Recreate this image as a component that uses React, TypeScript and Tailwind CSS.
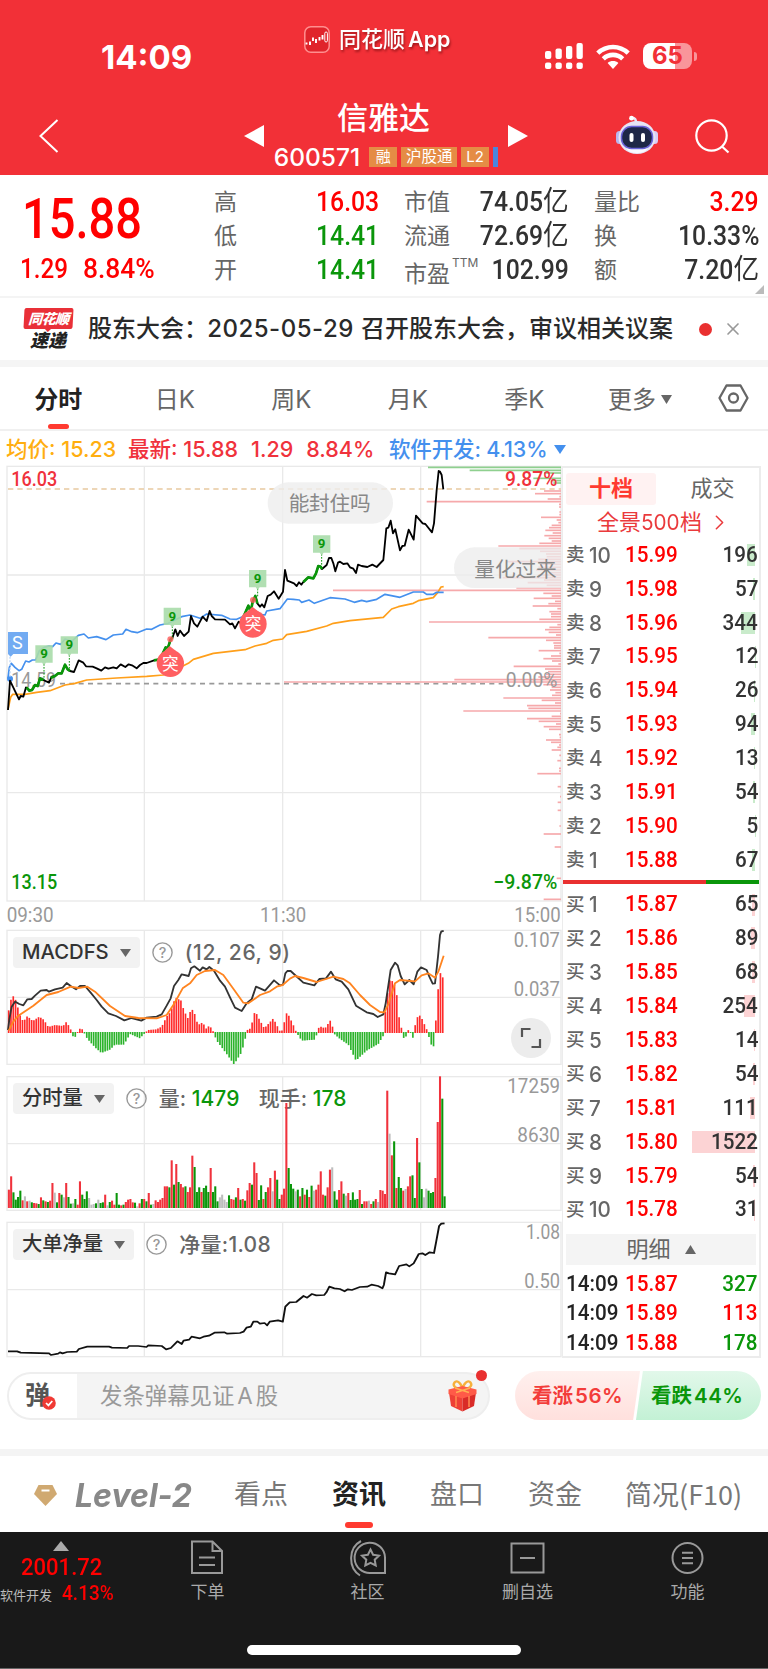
import React from "react";
import { ChevronRight, X } from "lucide-react";
import clsx from "clsx";

type Pt = [number, number];

// chart svgs use 3 units per css pixel
const priceBlack =
  "24,750 30,662 57,718 62,708 70,710 78,682 88,692 96,690 105,675 113,678 120,655 130,660 147,668 155,650 165,648 175,640 185,640 195,614 203,628 210,633 222,636 236,601 250,608 258,619 278,620 290,625 304,632 315,622 325,626 340,622 350,625 362,613 376,621 386,613 396,616 410,625 420,615 430,609 440,609 462,601 480,598 497,562 503,566 512,538 518,532 526,508 533,528 540,512 552,528 566,515 573,468 582,490 592,500 608,470 620,483 629,453 635,468 645,478 675,479 690,493 697,490 705,505 716,485 722,490 745,437 752,455 758,425 766,408 772,430 780,440 786,433 793,442 803,408 812,404 822,394 836,416 849,395 855,330 862,362 882,370 890,378 897,367 904,374 910,366 925,352 940,355 948,340 955,318 962,320 966,327 980,315 987,294 994,294 1000,310 1006,334 1014,308 1020,305 1030,312 1042,310 1050,322 1060,326 1068,339 1074,314 1085,318 1102,321 1117,314 1130,321 1150,300 1159,205 1165,203 1172,182 1179,220 1186,208 1200,271 1207,258 1214,257 1226,209 1241,239 1248,167 1268,190 1276,192 1296,217 1302,190 1310,90 1316,33 1320,35 1325,45 1330,88";

const greenRuns = [
  "80,682 88,692 96,690 105,675 113,678 120,655 130,660",
  "152,654 165,648 175,640 185,640 195,614 203,628 210,633",
  "462,601 480,598 497,562 503,566 512,538 518,532",
  "722,490 745,437 752,455 758,425 766,408 772,430",
  "910,366 925,352 940,355 948,340 955,318 962,320 966,327",
];

const avgLine =
  "24,748 32,712 38,703 75,703 110,697 150,692 195,675 225,670 260,660 350,654 440,649 490,645 520,632 565,610 580,598 640,580 735,569 765,558 800,550 820,541 848,537 860,524 920,514 980,498 1000,490 1050,482 1150,472 1175,447 1195,440 1240,430 1255,422 1300,413 1313,398 1323,381 1331,380";

const sectorLine =
  "24,655 28,622 34,610 45,622 57,632 65,628 77,603 87,606 97,600 107,600 118,572 132,562 147,558 158,560 168,549 182,553 195,537 215,544 235,526 252,522 265,534 290,530 318,539 340,525 368,522 378,508 395,515 412,518 440,507 455,508 480,495 505,490 545,470 570,465 600,475 620,462 665,466 690,477 710,478 745,463 765,458 780,463 795,465 800,453 840,446 862,417 880,418 898,420 905,427 927,420 943,430 990,413 1035,417 1063,427 1085,421 1100,425 1130,418 1155,403 1200,412 1240,396 1270,396 1280,403 1300,403 1310,397 1331,397";

// volume by price: [y, left edge], all bars end at the right border
const chipsGreen: Pt[] = [[22, 1284], [31, 1409], [39, 1632], [55, 1600], [62, 1655], [69, 1660]];
const chipsRed: Pt[] = [
  [93, 1632], [101, 1605], [110, 1678], [117, 1643], [125, 1280], [133, 1677], [141, 1677], [156, 1678], [164, 1678],
  [172, 1623], [180, 1670], [188, 1675], [196, 1655], [203, 1647], [211, 1636], [219, 1658], [227, 1633], [235, 1646],
  [243, 1655], [250, 1618], [258, 1495], [266, 1558], [274, 1620], [282, 1638], [290, 1640], [298, 1615], [305, 1520],
  [313, 1620], [322, 1615], [330, 1608], [338, 1645], [345, 1615], [353, 1508], [360, 1632], [368, 1583], [376, 1640],
  [384, 1549], [391, 999], [400, 1630], [408, 1655], [415, 1601], [424, 1665], [431, 1645], [438, 1598], [446, 1672],
  [455, 1648], [462, 1653], [470, 1653], [478, 1618], [486, 1287], [494, 1672], [502, 1648], [509, 1635], [517, 1646],
  [525, 1668], [533, 1465], [541, 1638], [549, 1660], [557, 1662], [564, 1662], [572, 1616], [580, 1678], [588, 1653],
  [596, 1630], [603, 1656], [612, 1675], [619, 1541], [627, 1635], [635, 1644], [643, 1638], [651, 1615], [659, 1363],
  [666, 852], [674, 1630], [682, 1655], [690, 1650], [698, 1666], [706, 1656], [714, 1510], [721, 1625], [729, 1665],
  [737, 1581], [745, 1585], [753, 1390], [761, 1680], [769, 1655], [776, 1581], [784, 1616], [792, 1668], [800, 1631],
  [808, 1647], [824, 1677], [832, 1679], [840, 1638], [847, 1653], [855, 1677], [862, 1672], [870, 1655], [886, 1678],
  [902, 1672], [925, 1677], [933, 1677], [941, 1612], [980, 1673], [1010, 1680], [1027, 1673], [1051, 1673],
  [1098, 1678], [1122, 1631], [1161, 1664], [1255, 1670], [1318, 1631],
];

const difLine =
  "24,510 28,478 35,440 45,425 58,432 70,436 82,418 95,417 105,407 122,392 140,390 147,395 165,388 188,383 200,369 212,378 228,388 240,378 255,378 272,398 290,420 305,440 325,460 348,468 373,481 395,474 424,482 440,473 470,470 485,463 500,437 512,415 522,378 535,360 545,343 566,348 573,325 583,319 600,332 608,322 620,328 628,321 642,332 660,362 675,380 690,412 705,443 725,453 740,430 755,418 768,380 780,385 795,392 822,361 840,376 849,374 856,340 862,333 872,333 885,345 910,368 943,376 958,357 978,355 993,335 1007,358 1025,365 1045,388 1068,437 1100,457 1120,462 1133,471 1150,463 1157,430 1172,330 1185,308 1193,316 1202,348 1214,373 1228,360 1241,373 1252,335 1263,322 1280,330 1288,350 1298,371 1305,370 1314,290 1320,225 1324,214 1331,213";
const deaLine =
  "26,512 40,485 55,467 100,437 140,405 175,396 212,380 235,384 262,380 285,395 330,438 375,468 415,474 470,475 500,465 522,432 548,385 570,370 590,345 615,333 645,330 670,345 700,386 730,428 745,430 780,405 810,394 830,380 848,375 870,356 885,348 910,354 950,366 1000,350 1030,357 1050,370 1080,405 1110,435 1140,456 1153,457 1166,430 1185,370 1200,360 1245,364 1265,346 1285,340 1305,353 1315,335 1331,287";

const histEnvelope: Pt[] = [
  [24, 462], [28, 440], [35, 410], [43, 408], [50, 430], [60, 466], [70, 485], [82, 468], [98, 483], [118, 470],
  [132, 480], [145, 501], [165, 495], [190, 498], [197, 485], [205, 495], [214, 512], [220, 530], [228, 528],
  [235, 510], [243, 503], [250, 512], [262, 535], [285, 560], [304, 577], [330, 567], [345, 552], [372, 552],
  [390, 520], [420, 533], [432, 520], [445, 510], [468, 508], [485, 500], [500, 470], [512, 455], [526, 412],
  [543, 422], [552, 452], [565, 477], [573, 445], [582, 455], [594, 495], [608, 487], [620, 508], [628, 495],
  [640, 515], [650, 540], [680, 580], [702, 611], [725, 575], [742, 510], [752, 505], [765, 452], [778, 478],
  [793, 505], [820, 475], [840, 514], [850, 510], [856, 460], [863, 460], [880, 495], [887, 512], [905, 540],
  [945, 537], [958, 498], [975, 505], [992, 480], [1003, 520], [1020, 535], [1045, 552], [1068, 600], [1100, 570],
  [1135, 550], [1150, 525], [1156, 455], [1164, 390], [1172, 350], [1179, 370], [1185, 375], [1193, 420],
  [1198, 480], [1206, 510], [1213, 540], [1225, 510], [1235, 520], [1240, 535], [1247, 485], [1255, 465],
  [1262, 468], [1272, 490], [1282, 512], [1290, 540], [1297, 562], [1302, 555], [1308, 475], [1315, 380],
  [1322, 335], [1330, 357],
];

const sampleAt = (x: number) => {
  for (let i = 1; i < histEnvelope.length; i++) {
    const [x0, y0] = histEnvelope[i - 1];
    const [x1, y1] = histEnvelope[i];
    if (x <= x1) return y0 + ((y1 - y0) * (x - x0)) / (x1 - x0);
  }
  return histEnvelope[histEnvelope.length - 1][1];
};
const histBars = Array.from({ length: 190 }, (_, i) => 26 + i * 6.89).map((x) => ({ x, y: sampleAt(x) }));

// r = up, g = down, y = flat
const volumeBars =
  "r55 r95 g47 g25 g33 g52 r23 y35 r20 y22 g17 r15 r14 g12 r32 g23 r20 g18 r22 r75 y46 g17 r45 g40 y32 r75 g33 g13 y14 g27 r10 r80 g40 g27 g50 y30 y10 y12 g14 y25 g15 g17 r40 y8 g18 r22 r10 g45 g10 r8 g10 r18 r25 r27 r17 g16 y5 r14 g27 r27 g20 r45 g10 y12 r23 r18 r25 r30 r65 r65 g62 r143 g70 r132 g78 r72 r62 g65 r48 r62 r157 g123 g48 g62 r48 g60 g67 g48 r120 g48 g65 g20 y32 y40 y25 y18 g38 r27 r25 g32 r60 g25 r27 g22 r53 r75 g70 r137 r105 g24 g68 r27 g48 r62 r90 y50 r112 g85 g27 r40 r58 r315 g120 g72 g58 y50 g55 r35 g60 r40 g55 r33 g67 y52 r55 r70 r110 r40 g37 r62 r115 y122 g50 g25 r54 r80 g43 y37 r45 g24 g47 g25 g27 r54 g12 r20 r20 y22 r12 g20 r27 y18 r54 r52 r42 r352 y223 r158 g200 r60 g93 g60 r52 y57 r65 r95 g98 g30 r210 g137 g57 y32 y58 g52 g45 g48 r90 r258 r395 g328 g35"
    .split(" ")
    .map((s) => ({ kind: s[0], h: Number(s.slice(1)) }));
const volumeColor: Record<string, string> = { r: "#f0323c", g: "#0a960a", y: "#bdbdbd" };

const netLine =
  "22,859 47,859 57,863 135,865 140,870 160,866 165,862 172,865 185,861 211,860 217,852 240,845 300,845 308,848 350,849 355,843 380,843 403,846 408,841 445,843 457,853 470,849 488,829 500,837 505,827 520,824 527,815 550,820 560,815 575,812 590,803 617,802 625,806 660,804 670,800 678,788 690,785 697,770 708,770 715,776 728,774 735,781 742,770 765,766 778,770 785,725 797,712 815,711 835,693 845,698 858,687 870,691 892,690 898,682 906,665 920,670 935,672 948,679 957,673 968,675 990,666 1010,665 1022,659 1040,663 1052,670 1056,660 1062,622 1070,625 1087,628 1098,603 1118,598 1126,604 1138,595 1152,567 1162,565 1170,570 1182,562 1194,564 1200,530 1208,483 1214,476 1223,475";

const sells = [
  [10, "15.99", 196], [9, "15.98", 57], [8, "15.96", 344], [7, "15.95", 12], [6, "15.94", 26],
  [5, "15.93", 94], [4, "15.92", 13], [3, "15.91", 54], [2, "15.90", 5], [1, "15.88", 67],
] as const;
const buys = [
  [1, "15.87", 65], [2, "15.86", 89], [3, "15.85", 68], [4, "15.84", 254], [5, "15.83", 14],
  [6, "15.82", 54], [7, "15.81", 111], [8, "15.80", 1522], [9, "15.79", 54], [10, "15.78", 31],
] as const;
const trades = [
  ["14:09", "15.87", 327, false],
  ["14:09", "15.89", 113, true],
  ["14:09", "15.88", 178, false],
] as const;

const Num = ({ className, children }: { className?: string; children: React.ReactNode }) => (
  <span className={clsx("inline-block whitespace-nowrap font-[Roboto] font-medium", className)}>{children}</span>
);

const StatusBar = () => (
  <div className="flex h-[100px] items-start text-white">
    <div className="ml-[101px] mt-[37px] w-[203px] text-[33px] font-bold leading-[40px]">14:09</div>
    <div className="mt-[26px] flex items-center gap-[9px]">
      <svg width="26" height="27" viewBox="0 0 26 27">
        <rect x="0.8" y="0.8" width="24.4" height="25.4" rx="6" fill="#e0242b" stroke="#ff8f8f" strokeWidth="1.5" />
        <path d="M2.500 18.500v-2M6 19v-3.500M9 15v-3.500M12 17v-4M15.500 14.500v-3.500M18.500 13.500V9" stroke="#fff" strokeWidth="1.900" />
        <rect x="20.800" y="6" width="2.600" height="10" rx="1.300" fill="none" stroke="#fff" />
      </svg>
      <span className="whitespace-nowrap text-[22px] font-medium leading-[27px] drop-shadow-[1px_2px_1px_rgba(80,0,0,0.5)]">
        同花顺<span className="ml-[3px] font-semibold text-[21.500px]">App</span>
      </span>
    </div>
    <div className="ml-auto mr-[71px] mt-[43px] flex items-center">
      <svg width="38" height="26" viewBox="0 0 38 26" fill="#fff">
        {[0, 10.5, 21, 31.5].map((x, i) => (
          <g key={x}>
            <rect x={x} y={[8, 5.5, 3, 0][i]} width="6.3" height={[8, 10.5, 13, 16][i]} rx="2" />
            <rect x={x} y="19.5" width="6.3" height="6.5" rx="2" />
          </g>
        ))}
      </svg>
      <svg className="ml-[13px]" width="34" height="25" viewBox="0 0 34 25" fill="none" stroke="#fff" strokeWidth="4.6">
        <path d="M1.8 9.2C10.5 1 23.500 1 32.200 9.200" />
        <path d="M7.300 14.800C12.800 9.600 21.200 9.600 26.700 14.800" />
        <path d="M17 25l-5.400-6c3-2.600 7.800-2.600 10.800 0z" fill="#fff" stroke="none" />
      </svg>
      <div className="ml-[13px] flex h-[26px] w-[49px] items-center justify-center rounded-[8px] bg-linear-to-r from-white from-65% to-[#f9959a] to-65%">
        <span className="text-[24px] font-bold leading-[26px] text-[#f23037]">65</span>
      </div>
      <div className="ml-[2px] h-[9px] w-[3px] rounded-r-full bg-[#f9959a]" />
    </div>
  </div>
);

const Robot = () => (
  <svg width="42" height="40" viewBox="0 0 42 40">
    <path d="M20 8c0-4-1-5-4-5" fill="none" stroke="#e8e6f5" strokeWidth="2.600" />
    <circle cx="15.500" cy="3.200" r="2.400" fill="#fff" />
    <rect x="0" y="16" width="7" height="13" rx="3.500" fill="#b9b6ee" />
    <rect x="35" y="16" width="7" height="13" rx="3.500" fill="#d9cdf5" />
    <ellipse cx="21" cy="22.500" rx="18.500" ry="16.500" fill="#e6e4f4" />
    <ellipse cx="21" cy="34" rx="10" ry="4" fill="#fafaff" />
    <rect x="5.500" y="11.500" width="31" height="22" rx="10" fill="#1e2747" stroke="#6a63d8" strokeWidth="1.500" />
    <rect x="13.500" y="18" width="4" height="9" rx="2" fill="#fff" />
    <rect x="25" y="18" width="4" height="9" rx="2" fill="#fff" />
  </svg>
);

const TitleBar = () => (
  <div className="grid h-[75px] grid-cols-[244px_284px_240px] text-white">
    <svg className="ml-[39px] mt-[19px]" width="20" height="34" viewBox="0 0 20 34" fill="none" stroke="#fff" strokeWidth="2">
      <path d="M18.500 1L1.500 17l17 16" />
    </svg>
    <div className="flex justify-between">
      <svg className="mt-[25px]" width="20" height="22" viewBox="0 0 20 22">
        <path d="M20 0v22L0 11z" fill="#fff" />
      </svg>
      <div className="flex flex-col items-center">
        <div className="mr-[5px] text-[31px] font-medium leading-[36px]">信雅达</div>
        <div className="mt-[11px] flex h-[20px] items-center text-[17px] leading-[20px]">
          <span className="mr-[9px] text-[24.500px] font-medium">600571</span>
          <span className="w-[28px] bg-[#e58c45] text-center text-[15px]">融</span>
          <span className="ml-1 w-[56px] bg-[#e58c45] text-center text-[15.500px]">沪股通</span>
          <span className="ml-1 w-[28px] bg-[#e58c45] text-center text-[15px]">L2</span>
          <span className="ml-1 h-[20px] w-[5px] bg-[#4a86dd]" />
        </div>
      </div>
      <svg className="mt-[25px]" width="20" height="22" viewBox="0 0 20 22">
        <path d="M0 0v22l20-11z" fill="#fff" />
      </svg>
    </div>
    <div className="flex items-start pl-[88px] pt-[15px]">
      <Robot />
      <svg className="ml-[37px] mt-[4px]" width="35" height="35" viewBox="0 0 35 35" fill="none" stroke="#fff" strokeWidth="2.200">
        <circle cx="16.500" cy="16.500" r="15.200" />
        <path d="M27 27.500l6.500 6" />
      </svg>
    </div>
  </div>
);

const Stat = ({ label, sup, value, unit, color = "text-[#323232]" }: { label: string; sup?: string; value: string; unit?: string; color?: string }) => (
  <div className="flex h-[34px] items-center justify-between leading-[34px]">
    <span className="whitespace-nowrap text-[23px] text-[#666]">
      {sup ? <span className="relative top-[4px]">{label}</span> : label}
      {sup && <sup className="-top-[11px] ml-[2px] text-[12px]">{sup}</sup>}
    </span>
    <Num className={clsx("origin-right scale-x-[0.9] text-[27.500px]", color)}>
      {value}
      {unit && <span className="font-['Noto_Sans_CJK_SC'] text-[28.500px] font-normal leading-none">{unit}</span>}
    </Num>
  </div>
);

const Quote = () => (
  <div className="relative grid h-[123px] grid-cols-[188px_165px_165px_165px] gap-x-[25px] border-b-2 border-[#f4f4f4] pl-px pt-[10px]">
    <div className="-mr-[26px] pl-[21px] text-[#f00]">
      <div className="h-[68px]">
        <Num className="origin-left scale-x-[0.84] text-[56px] leading-[68px]">15.88</Num>
      </div>
      <div className="-ml-[2px] flex h-[34px] w-[135px] justify-between leading-[32px]">
        <Num className="-mr-4 origin-left scale-x-[0.88] text-[27.500px]">1.29</Num>
        <Num className="origin-right scale-x-[0.960] text-[27.500px]">8.84%</Num>
      </div>
    </div>
    <div>
      <Stat label="高" value="16.03" color="text-[#f00]" />
      <Stat label="低" value="14.41" color="text-[#0a960a]" />
      <Stat label="开" value="14.41" color="text-[#0a960a]" />
    </div>
    <div>
      <Stat label="市值" value="74.05" unit="亿" />
      <Stat label="流通" value="72.69" unit="亿" />
      <Stat label="市盈" sup="TTM" value="102.99" />
    </div>
    <div>
      <Stat label="量比" value="3.29" color="text-[#f00]" />
      <Stat label="换" value="10.33%" />
      <Stat label="额" value="7.20" unit="亿" />
    </div>
    <svg className="absolute bottom-[2px] right-[4px]" width="9" height="9" viewBox="0 0 9 9">
      <path d="M9 0v9H0z" fill="#bbb" />
    </svg>
  </div>
);

const News = () => (
  <div className="flex h-[62px] items-center pl-[22px] text-[24px] font-medium text-[#2a2a2a]">
    <div className="flex w-[52px] flex-col items-center">
      <div className="relative flex h-[21px] w-[49px] -skew-x-3 items-center justify-center rounded-[2px] bg-[#e93038] text-[14px] font-black italic leading-none tracking-[-0.5px] text-white">
        同花顺
        <div className="absolute -bottom-[2px] left-[22px] h-[5px] w-[5px] rotate-45 bg-[#e93038]" />
      </div>
      <div className="mt-[3px] text-[18px] font-black italic leading-[18px] text-[#222]">速递</div>
    </div>
    <div className="ml-[14px] flex w-[585px] items-center justify-between whitespace-nowrap">
      <span className="-mr-[8px]">股东大会：</span>
      <span className="tracking-[0.500px]">2025-05-29</span>
      <span>召开股东大会，审议相关议案</span>
    </div>
    <div className="ml-[26px] h-[13px] w-[13px] rounded-full bg-[#e93030]" />
    <X className="ml-[11px] text-[#999]" size={20} strokeWidth={2} />
  </div>
);

const periods = ["分时", "日K", "周K", "月K", "季K"];

const PeriodTabs = () => (
  <div className="flex h-[64px] items-center border-b-2 border-[#f0f0f0] text-[24px] text-[#666]">
    {periods.map((p, i) => (
      <div key={p} className={clsx("relative flex h-full w-[116.500px] items-center justify-center pt-[3px]", i === 0 && "font-bold text-[#222]")}>
        {p}
        {i === 0 && <div className="absolute bottom-0 left-[48px] h-[5px] w-[21px] rounded-full bg-[#ff3a30]" />}
      </div>
    ))}
    <div className="flex w-[115px] items-center justify-center gap-[5px] pt-[3px]">
      更多
      <svg width="11" height="9" viewBox="0 0 11 9">
        <path d="M0 0h11L5.500 9z" fill="#666" />
      </svg>
    </div>
    <svg className="ml-[20px]" width="31" height="28" viewBox="0 0 31 28" fill="none" stroke="#666" strokeWidth="2.300">
      <path d="M8.500 1.500h14L29.500 14l-7 12.500h-14L1.500 14z" strokeLinejoin="round" />
      <circle cx="15.500" cy="14" r="4.500" />
    </svg>
  </div>
);

const Legend = () => (
  <div className="grid h-[29px] grid-cols-[122px_261px_190px_1fr] items-start whitespace-pre pl-[6px] text-[21.500px] font-medium leading-[36px]">
    <div className="text-[#ffae10]">均价: 15.23</div>
    <div className="flex gap-[13px] text-[#f0323c]">
      <span>最新: 15.88</span>
      <span>1.29</span>
      <span>8.84%</span>
    </div>
    <div className="flex items-center gap-[7px] text-[#4490ee]">
      <span className="tracking-[-0.150px]">软件开发: 4.13%</span>
      <svg className="shrink-0" width="12" height="9" viewBox="0 0 12 9">
        <path d="M0 0h12L6 9z" fill="#4490ee" />
      </svg>
    </div>
  </div>
);

const GridLines = ({ top, bottom, rows }: { top: number; bottom: number; rows: number[] }) => (
  <g stroke="#e9e9e9" strokeWidth="4" fill="none">
    <rect x="21" y={top} width="1662" height={bottom - top} />
    {[433, 848, 1262].map((x) => (
      <path key={x} d={`M${x} ${top}V${bottom}`} />
    ))}
    {rows.map((y) => (
      <path key={y} d={`M21 ${y}H1683`} />
    ))}
  </g>
);

const AxisText = ({ x, y, w, size = 58, fill = "#999", children }: { x: number; y: number; w: number; size?: number; fill?: string; children: string }) => (
  <text x={x} y={y} textLength={w} lengthAdjust="spacingAndGlyphs" fontSize={size} fill={fill} fontFamily="Roboto">
    {children}
  </text>
);

const NineTag = ({ x, y, to }: { x: number; y: number; to: number }) => (
  <g>
    <path d={`M${x} ${y + 56}V${to}`} stroke="#0a960a" strokeWidth="3" strokeDasharray="5 4" />
    <path d={`M${x - 26} ${y}h52v52h-20l-6 8-6-8h-20z`} fill="#a9dcaa" fillOpacity="0.9" />
    <text x={x} y={y + 39} textAnchor="middle" fontSize="40" fontWeight="700" fill="#0a960a" fontFamily="Roboto">9</text>
  </g>
);

const BreakTag = ({ x, y, tx, ty }: { x: number; y: number; tx: number; ty: number }) => (
  <g>
    <circle cx={tx} cy={ty} r="9" fill="#ff5a5a" fillOpacity="0.8" />
    <path d={`M${x - 18} ${y - 36}L${x - 2} ${y - 52}L${x + 18} ${y - 36}z`} fill="#ff5f61" />
    <circle cx={x} cy={y} r="41" fill="#ff5f61" />
    <text x={x} y={y + 19} textAnchor="middle" fontSize="50" fill="#fff" fontFamily="Noto Sans CJK SC">突</text>
  </g>
);

const PriceChart = () => (
  <svg className="block" width="562" height="467" viewBox="0 0 1686 1401" fill="none">
    <GridLines top={19} bottom={1323} rows={[345, 998]} />
    <path d="M24 87H1683" stroke="#e8c9a0" strokeWidth="4" strokeDasharray="16 12" />
    <path d="M180 671H1510" stroke="#999" strokeWidth="5" strokeDasharray="15 13" />
    <g stroke="#8fd08f" strokeWidth="5">
      {chipsGreen.map(([y, x]) => <path key={y} d={`M${x} ${y}H1683`} />)}
    </g>
    <g stroke="#f6a9ab" strokeWidth="5">
      {chipsRed.map(([y, x]) => <path key={y} d={`M${x} ${y}H1683`} />)}
    </g>
    <rect x="803" y="67" width="376" height="124" rx="62" fill="#eee" fillOpacity="0.8" />
    <path d="M1683 262H1423a61 61 0 0 0 0 122H1683z" fill="#ececec" fillOpacity="0.75" />
    <g fontSize="62" fill="#888" fontFamily="Noto Sans CJK SC">
      <text x="866" y="153" textLength="246">能封住吗</text>
      <text x="1423" y="350" textLength="247">量化过来</text>
    </g>
    <AxisText x={34} y={682} w={134}>14.59</AxisText>
    <AxisText x={1517} y={682} w={155}>0.00%</AxisText>
    <polyline points={avgLine} stroke="#ff9f1a" strokeWidth="5" strokeLinejoin="round" />
    <polyline points={sectorLine} stroke="#4490ee" strokeWidth="5" strokeLinejoin="round" />
    <circle cx="30" cy="656" r="9" fill="#4490ee" />
    <path d="M30 590V650" stroke="#bcd7fa" strokeWidth="4" strokeDasharray="6 5" />
    <polyline points={priceBlack} stroke="#000" strokeWidth="5.500" strokeLinejoin="round" />
    {greenRuns.map((r) => <polyline key={r} points={r} stroke="#0a960a" strokeWidth="8" strokeLinejoin="round" />)}
    <path d="M24 516h60v66H40l-8 8-8-8z" fill="#5f9ff0" fillOpacity="0.88" />
    <text x="52" y="567" textAnchor="middle" fontSize="54" fill="#fff" fontFamily="Roboto">S</text>
    <NineTag x={132} y={556} to={660} />
    <NineTag x={208} y={529} to={630} />
    <NineTag x={517} y={443} to={530} />
    <NineTag x={773} y={330} to={410} />
    <NineTag x={965} y={226} to={318} />
    <BreakTag x={511} y={610} tx={511} ty={538} />
    <BreakTag x={759} y={492} tx={759} ty={420} />
    <g fontWeight="500">
      <AxisText x={34} y={79} w={138} size={60} fill="#f0323c">16.03</AxisText>
      <AxisText x={1515} y={79} w={157} size={60} fill="#f0323c">9.87%</AxisText>
      <AxisText x={34} y={1286} w={138} size={60} fill="#0a960a">13.15</AxisText>
      <AxisText x={1480} y={1286} w={192} size={60} fill="#0a960a">−9.87%</AxisText>
    </g>
    <AxisText x={20} y={1385} w={141} size={60}>09:30</AxisText>
    <AxisText x={780} y={1385} w={139} size={60}>11:30</AxisText>
    <AxisText x={1543} y={1385} w={139} size={60}>15:00</AxisText>
  </svg>
);

const PanelHead = ({ name, children, className }: { name: string; children: React.ReactNode; className?: string }) => (
  <div className={clsx("absolute left-[13px] flex h-[31px] items-center whitespace-pre text-[21px] font-medium text-[#666]", className)}>
    <div className="flex h-full items-center gap-[11px] rounded-[4px] bg-[#f2f2f2] px-[9px] text-[20.300px] text-[#333]">
      {name}
      <svg width="11" height="8" viewBox="0 0 11 8">
        <path d="M0 0h11L5.500 8z" fill="#666" />
      </svg>
    </div>
    <svg className="mx-[12px]" width="21" height="21" viewBox="0 0 21 21" fill="none">
      <circle cx="10.500" cy="10.500" r="9.600" stroke="#999" strokeWidth="1.400" />
      <text x="10.500" y="15.500" textAnchor="middle" fontSize="14.500" fill="#999" fontFamily="Inter">?</text>
    </svg>
    {children}
  </div>
);

const MacdPanel = () => (
  <div className="relative h-[139px]">
    <svg className="block" width="562" height="139" viewBox="0 201 1686 417" fill="none">
      <GridLines top={211} bottom={613} rows={[412]} />
      {histBars.map(({ x, y }) =>
        y < 516 ? (
          <path key={x} d={`M${x} 519V${y}`} stroke="#ff2a2a" strokeWidth="5" />
        ) : (
          <path key={x} d={`M${x} 516V${y + 2}`} stroke="#2bb32b" strokeWidth="5" />
        )
      )}
      <polyline points={difLine} stroke="#333" strokeWidth="5.500" strokeLinejoin="round" />
      <polyline points={deaLine} stroke="#ff8420" strokeWidth="5.500" strokeLinejoin="round" />
      <AxisText x={1541} y={262} w={139}>0.107</AxisText>
      <AxisText x={1541} y={407} w={139}>0.037</AxisText>
    </svg>
    <PanelHead name="MACDFS" className="top-[10px]">
      <span className="tracking-[0.600px]">(12, 26, 9)</span>
    </PanelHead>
    <div className="absolute left-[511px] top-[91px] flex h-[40px] w-[40px] items-center justify-center rounded-full bg-[#ececec]">
      <svg width="22" height="22" viewBox="0 0 22 22" fill="none" stroke="#555" strokeWidth="2.200">
        <path d="M2 10V2h8.500M20 12v8h-8.500" />
      </svg>
    </div>
  </div>
);

const VolumePanel = () => (
  <div className="relative h-[148px]">
    <svg className="block" width="562" height="148" viewBox="0 3 1686 444" fill="none">
      <GridLines top={35} bottom={436} rows={[236]} />
      <AxisText x={1522} y={85} w={158}>17259</AxisText>
      <AxisText x={1552} y={231} w={128}>8630</AxisText>
    </svg>
    <PanelHead name="分时量" className="top-[17px]">
      <span className="w-[33px]">量:</span>
      <span className="w-[67px] text-[#0a960a]">1479</span>
      <span className="w-[54px]">现手:</span>
      <span className="text-[#0a960a]">178</span>
    </PanelHead>
    <svg className="absolute left-0 top-0" width="562" height="148" viewBox="0 3 1686 444">
      {volumeBars.map((b, i) => (
        <rect key={i} x={23.5 + i * 6.88} y={429 - b.h} width="6.200" height={b.h} fill={volumeColor[b.kind]} />
      ))}
    </svg>
  </div>
);

const NetPanel = () => (
  <div className="relative h-[148px]">
    <svg className="block" width="562" height="148" viewBox="0 447 1686 444" fill="none">
      <GridLines top={472} bottom={875} rows={[674]} />
      <g transform="scale(1.0905 1)">
        <polyline points={netLine} stroke="#111" strokeWidth="5.200" strokeLinejoin="round" />
      </g>
      <AxisText x={1578} y={522} w={102}>1.08</AxisText>
      <AxisText x={1573} y={668} w={107}>0.50</AxisText>
    </svg>
    <PanelHead name="大单净量" className="top-[15px]">
      <span className="tracking-[0.300px]">净量:1.08</span>
    </PanelHead>
  </div>
);

const DepthRow = ({ side, level, price, vol }: { side: "卖" | "买"; level: number; price: string; vol: number }) => (
  <div className="relative flex h-[33.900px] items-center pl-[3px] pr-px text-[21.500px]">
    <div
      className={clsx("absolute right-[4px] h-[22px]", side === "卖" ? "bg-[#c9ebcb]" : "bg-[#fcd3d4]")}
      style={{ width: (vol / 1522) * 63.5 }}
    />
    <span className="w-[23px] text-[18.500px] font-medium text-[#666]">{side}</span>
    <span className="w-[36px] font-medium text-[#666]">
      <span className="inline-block origin-left scale-x-[0.96]">{level}</span>
    </span>
    <Num className="origin-left scale-x-[0.96] text-[#f00]">{price}</Num>
    <Num className="relative ml-auto origin-right scale-x-[0.96] text-[#333]">{vol}</Num>
  </div>
);

const OrderBook = () => (
  <div className="mt-[6px] h-[892px] w-[199px] border-2 border-l-[1px] border-[#ececec] text-[#666]">
    <div className="flex h-[38px] items-center pl-[3px] pt-[3px] text-[22px]">
      <div className="flex h-[32px] w-[90px] items-center justify-center rounded-[3px] bg-[#fff2f2] font-bold text-[#ff3a30]">十档</div>
      <div className="flex-1 pl-[10px] text-center">成交</div>
    </div>
    <div className="flex h-[32px] items-center pl-[34px] pt-px text-[22px] text-[#ea3a3c]">
      <span className="whitespace-nowrap">
        全景<span className="inline-block w-[39px] origin-left scale-x-[0.940]">500</span>档
      </span>
      <ChevronRight className="ml-[5px]" size={25} strokeWidth={1.5} />
    </div>
    {sells.map(([l, p, v]) => <DepthRow key={l} side="卖" level={l} price={p} vol={v} />)}
    <div className="flex h-[10.700px] items-center">
      <div className="h-[4px] w-[143px] bg-[#e93030]" />
      <div className="h-[4px] flex-1 bg-[#0a960a]" />
    </div>
    {buys.map(([l, p, v]) => <DepthRow key={l} side="买" level={l} price={p} vol={v} />)}
    <div className="ml-[3px] mr-[3px] mt-[7px] flex h-[31px] items-center justify-center gap-[14px] bg-[#f4f4f4] text-[22px]">
      明细
      <svg width="11" height="9" viewBox="0 0 11 9">
        <path d="M0 9h11L5.500 0z" fill="#666" />
      </svg>
    </div>
    <div className="mt-[4px] text-[22px]">
      {trades.map(([t, p, v, up]) => (
        <div key={p} className="flex h-[29.500px] items-center pl-[3px] pr-px">
          <Num className="w-[59px] origin-left scale-x-[0.940] text-[#222]">{t}</Num>
          <Num className="origin-left scale-x-[0.940] text-[#f00]">{p}</Num>
          <Num className={clsx("ml-auto origin-right scale-x-[0.940]", up ? "text-[#f00]" : "text-[#0a960a]")}>{v}</Num>
        </div>
      ))}
    </div>
  </div>
);

const Gift = () => (
  <svg width="29" height="32" viewBox="0 0 29 32">
    <path d="M14 9C8 9 4 6 6.500 2.500S14 4 14 9zM15 9c6 0 10-3 7.500-6.500S15 4 15 9z" fill="none" stroke="#f6b03c" strokeWidth="2.400" />
    <path d="M1 12.500l13.500 5v14L3 26z" fill="#ee4036" />
    <path d="M28 12.500l-13.500 5v14L26 26z" fill="#d92b28" />
    <path d="M0.500 9.500L14.500 6l14 3.500v4.500l-14 4.500-14-4.500z" fill="#ff5a48" />
    <path d="M7 8l14 4.500M22 8L8 12.500" fill="none" stroke="#ffb052" strokeWidth="1.500" />
    <path d="M8 16v11M21 16v11" stroke="#ff8a50" strokeWidth="1.500" />
  </svg>
);

const DanmakuBar = () => (
  <div className="flex h-[87px] pl-[7px] pt-[10px]">
    <div className="relative flex h-[48px] w-[483px] items-center overflow-visible rounded-full border-2 border-[#eee] bg-[#f4f4f4]">
      <div className="relative h-full w-[68px] rounded-l-full bg-white pl-[16px] text-[25px] font-bold leading-[43px] text-[#555]">
        弹
        <svg className="absolute left-[33px] top-[22px]" width="14" height="14" viewBox="0 0 14 14">
          <circle cx="7" cy="7" r="6.800" fill="#f03a34" />
          <path d="M4 7l2.400 2.400L10.300 5" fill="none" stroke="#fff" strokeWidth="1.700" />
        </svg>
      </div>
      <span className="ml-[23px] text-[22.400px] text-[#999]">
        发条弹幕见证<span className="mx-[3px]">A</span>股
      </span>
      <div className="absolute right-[11px] top-[6px]">
        <Gift />
      </div>
      <div className="absolute -top-[4px] right-[1px] h-[11px] w-[11px] rounded-full bg-[#e93030]" />
    </div>
    <div className="ml-[25px] flex h-[49px] -translate-y-px text-[20.500px] font-semibold leading-[50px]">
      <div className="w-[125px] rounded-l-full bg-linear-to-b from-[#fff0ee] to-[#ffe0dd] pl-[17px] text-[#f33c3a] [clip-path:polygon(0_0,100%_0,94.5%_100%,0_100%)]">
        看涨<span className="ml-[2px] tracking-[0.500px]">56%</span>
      </div>
      <div className="-ml-[4px] w-[125px] rounded-r-full bg-linear-to-b from-[#e2f8ea] to-[#c3f1d5] pl-[15px] text-[#0a960a] [clip-path:polygon(5.5%_0,100%_0,100%_100%,0_100%)]">
        看跌<span className="ml-[2px] tracking-[0.500px]">44%</span>
      </div>
    </div>
  </div>
);

const sections = ["看点", "资讯", "盘口", "资金"];

const SectionTabs = () => (
  <div className="flex h-[76px] items-center text-[27px] text-[#777]">
    <div className="flex w-[212px] items-center pl-[34px] pt-[2px]">
      <svg width="23" height="21" viewBox="0 0 23 21">
        <path d="M4.500 0h14L23 9 11.500 21 0 9z" fill="#d0a971" />
        <path d="M7.500 5.500h8" stroke="#fff" strokeWidth="2" />
      </svg>
      <span className="ml-[18px] origin-left scale-x-[0.970] whitespace-nowrap text-[33px] font-bold italic leading-none text-[#888]">Level-2</span>
    </div>
    {sections.map((s) => (
      <div key={s} className={clsx("relative flex h-full w-[98px] items-center justify-center pt-[2px]", s === "资讯" && "font-bold text-[#222]")}>
        {s}
        {s === "资讯" && <div className="absolute bottom-[4px] left-[35px] h-[6px] w-[28px] rounded-full bg-[#ff3a30]" />}
      </div>
    ))}
    <div className="ml-[21px] whitespace-nowrap pt-[2px]">
      简况<span className="inline-block font-['Noto_Sans_CJK_SC']">(F10)</span>
    </div>
  </div>
);

const actions = [
  { name: "下单", icon: <path d="M2 1.500h20.500L32 11v22H2zM22.500 1.500V11H32M9 17.500h16M9 25h16" /> },
  {
    name: "社区",
    icon: (
      <>
        <path d="M35 33H21A15.200 15.200 0 1 1 35 17.500zM11 1C-2 8-2 28 10 35.500" />
        <path d="M20.500 9.500l2.600 5.300 5.900.8-4.300 4.100 1 5.800-5.200-2.700-5.200 2.700 1-5.800-4.300-4.100 5.900-.8z" />
      </>
    ),
  },
  { name: "删自选", icon: <path d="M1.500 3.500h32v29h-32zM10 18h15" /> },
  {
    name: "功能",
    icon: (
      <>
        <circle cx="17.500" cy="18" r="15" />
        <path d="M12 12.800h11M12 18h11M12 23.200h11" />
      </>
    ),
  },
];

const BottomBar = () => (
  <div className="flex h-[137px] flex-col items-center justify-between border-b border-[#666] bg-[#191919]">
    <div className="flex w-full">
      <div className="relative flex w-[127px] flex-col pt-[9px] text-[#f00]">
        <svg className="ml-[53px]" width="16" height="10" viewBox="0 0 16 10">
          <path d="M0 10h16L8 0z" fill="#aaa" />
        </svg>
        <Num className="ml-[21px] mt-[3px] origin-left scale-x-[0.900] text-[24.500px] leading-[26px]">2001.72</Num>
        <div className="mt-px flex items-center whitespace-nowrap leading-[24px]">
          <span className="w-[62px] pt-[2px] text-[13px] text-[#bbb]">软件开发</span>
          <Num className="-mt-[3px] origin-left scale-x-[0.930] text-[20.500px]">4.13%</Num>
        </div>
      </div>
      {actions.map((a) => (
        <div key={a.name} className="flex w-[160px] flex-col items-center pt-[8px] pl-px text-[17px] leading-[24px] text-[#aaa]">
          <svg className="overflow-visible" width="35" height="36" viewBox="0 0 35 36" fill="none" stroke="#999" strokeWidth="2">
            {a.icon}
          </svg>
          <span className="mt-[4px]">{a.name}</span>
        </div>
      ))}
    </div>
    <div className="mb-[13px] h-[10px] w-[274px] rounded-full bg-white" />
  </div>
);

export default function App() {
  return (
    <div className="flex h-[1669px] w-[768px] flex-col overflow-hidden bg-white font-[Inter,'Noto_Sans_CJK_SC',sans-serif]">
      <div className="bg-[#f23037]">
        <StatusBar />
        <TitleBar />
      </div>
      <Quote />
      <News />
      <div className="h-[7px] bg-[#f5f5f5]" />
      <PeriodTabs />
      <Legend />
      <div className="flex h-[902px]">
        <div className="w-[562px]">
          <PriceChart />
          <MacdPanel />
          <VolumePanel />
          <NetPanel />
        </div>
        <OrderBook />
      </div>
      <DanmakuBar />
      <div className="h-[7px] bg-[#f4f4f4]" />
      <SectionTabs />
      <BottomBar />
    </div>
  );
}
